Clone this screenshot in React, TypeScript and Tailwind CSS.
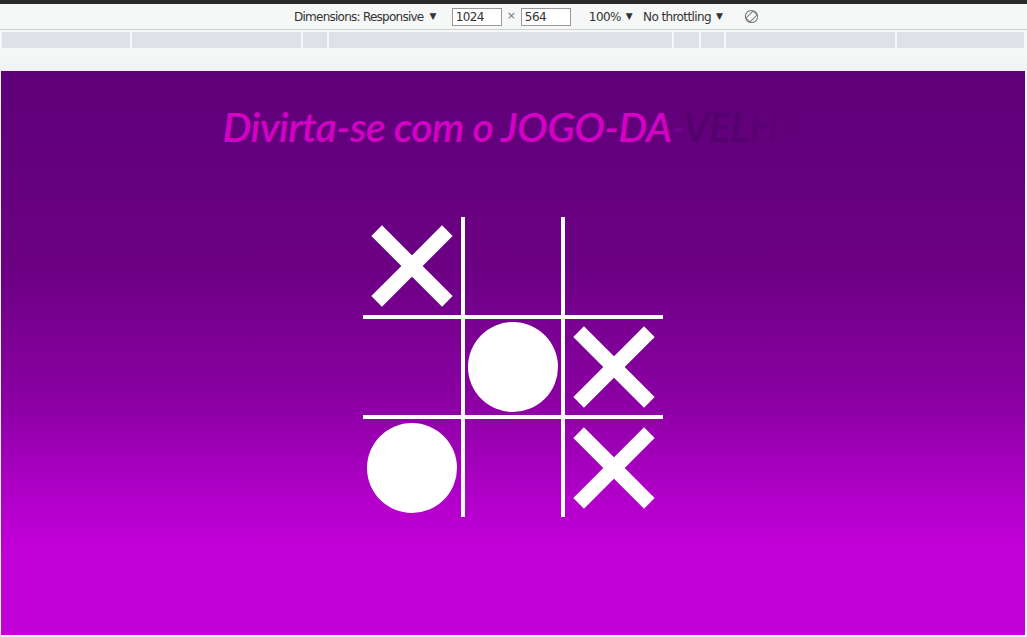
const board: ("X" | "O" | "")[] = ["X", "", "", "", "O", "X", "O", "", "X"];

function Cross() {
  return (
    <svg width="100" height="100" viewBox="0 0 100 100" className="shrink-0">
      <rect x="42.5" y="0" width="15" height="100" fill="#fff" transform="rotate(45 50 50)" />
      <rect x="42.5" y="0" width="15" height="100" fill="#fff" transform="rotate(-45 50 50)" />
    </svg>
  );
}

function Cell({ value, index }: { value: string; index: number }) {
  const row = Math.floor(index / 3);
  const col = index % 3;
  const borders = [
    row === 0 ? "border-t-0" : "",
    row === 2 ? "border-b-0" : "",
    col === 0 ? "border-l-0" : "",
    col === 2 ? "border-r-0" : "",
  ].join(" ");
  return (
    <div className={`w-[100px] h-[100px] border-2 border-white flex items-center justify-center overflow-visible ${borders}`}>
      {value === "X" && <Cross />}
      {value === "O" && <div className="w-[90px] h-[90px] rounded-full bg-white shrink-0" />}
    </div>
  );
}

function DevToolbar() {
  return (
    <div className="font-['DejaVu_Sans',sans-serif] text-[12px] text-[#333]">
      <div className="h-[4px] bg-[#2b2b2b]" />
      <div className="h-[26px] bg-[#f6f7f7] border-b border-[#cfd1d6] flex items-center">
        <div className="ml-[294px] flex items-center gap-[6px] tracking-[-0.75px]">
          <span>Dimensions: Responsive</span>
          <span className="text-[9px]">▼</span>
        </div>
        <div className="ml-[16px] w-[50px] h-[18px] border border-[#999] bg-white px-[3px] leading-[16px] tracking-[-0.6px]">1024</div>
        <span className="mx-[5px] text-[#777] text-[11px]">×</span>
        <div className="w-[50px] h-[18px] border border-[#999] bg-white px-[3px] leading-[16px] tracking-[-0.6px]">564</div>
        <div className="ml-[18px] flex items-center gap-[5px] tracking-[-0.6px]">
          <span>100%</span>
          <span className="text-[9px]">▼</span>
        </div>
        <div className="ml-[11px] flex items-center gap-[5px] tracking-[-0.6px]">
          <span>No throttling</span>
          <span className="text-[9px]">▼</span>
        </div>
        <svg className="ml-[22px]" width="15" height="15" viewBox="0 0 16 16" fill="none" stroke="#777" strokeWidth="1.1">
          <circle cx="8" cy="8" r="6.5" />
          <rect x="5" y="2.5" width="6" height="11" rx="1" transform="rotate(45 8 8)" />
        </svg>
      </div>
      <div className="h-[2px] bg-[#f6f7f7]" />
      <div className="h-[16px] flex bg-[#f6f7f7]">
        <div className="w-[1px]" />
        <div className="w-[128px] bg-[#dee1e6] ml-[1px]" />
        <div className="w-[169px] bg-[#dee1e6] ml-[2px]" />
        <div className="w-[24px] bg-[#dee1e6] ml-[2px]" />
        <div className="w-[343px] bg-[#dee1e6] ml-[2px]" />
        <div className="w-[25px] bg-[#dee1e6] ml-[2px]" />
        <div className="w-[23px] bg-[#dee1e6] ml-[2px]" />
        <div className="w-[169px] bg-[#dee1e6] ml-[2px]" />
        <div className="w-[127px] bg-[#dee1e6] ml-[2px]" />
      </div>
      <div className="h-[23px] bg-gradient-to-b from-[#f6f7f7] to-[#f1f2f2]" />
    </div>
  );
}

export default function App() {
  return (
    <div className="w-[1027px] h-[637px] bg-[#f3f4f4] overflow-hidden">
      <DevToolbar />
      <div className="ml-[1px] w-[1024px] h-[564px] bg-[linear-gradient(180deg,#5e0077_0%,#6c0084_35%,#8a00a2_58%,#b000c8_75%,#c200d8_85%,#c200d8_100%)] flex flex-col items-center">
        <h1 className="mt-[28px] text-[41px] leading-[56px] font-semibold italic font-['Lato',sans-serif] tracking-[-0.6px] text-[#d400c6]">
          Divirta-se com o JOGO-DA
          <span className="text-[#74008e]">-</span>
          <span className="text-[#53006d]">VEL</span>
          <span className="text-[#5a0073]">H</span>
          <span className="text-[#5f0079]">A</span>
        </h1>
        <div className="mt-[62px] grid grid-cols-3 w-[300px]">
          {board.map((v, i) => (
            <Cell key={i} value={v} index={i} />
          ))}
        </div>
      </div>
    </div>
  );
}
